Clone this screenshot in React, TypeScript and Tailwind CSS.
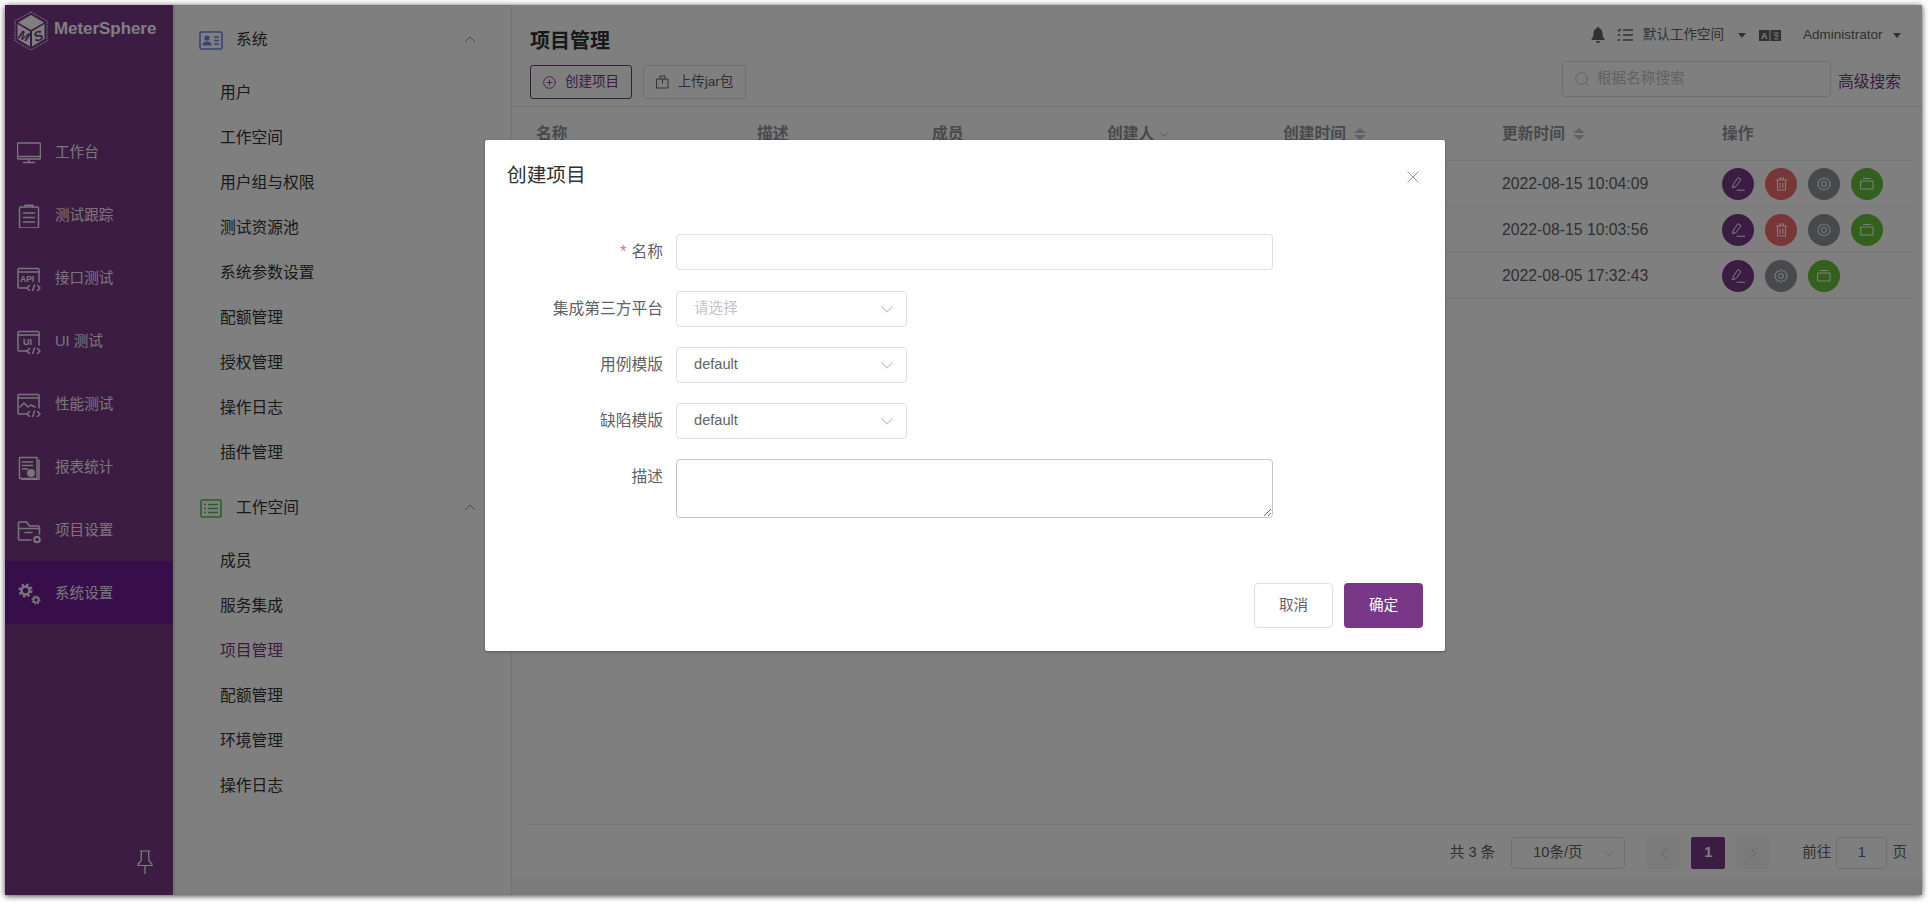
import React from "react";

const S = ({ children, w = 24, h = 24, vb = "0 0 24 24", sw = 1.5, cls = "" }: { children: React.ReactNode; w?: number; h?: number; vb?: string; sw?: number; cls?: string }) => (
  <svg width={w} height={h} viewBox={vb} fill="none" stroke="currentColor" strokeWidth={sw} strokeLinecap="round" strokeLinejoin="round" className={`shrink-0 ${cls}`}>
    {children}
  </svg>
);

const Code = ({ x = 12, y = 21 }: { x?: number; y?: number }) => (
  <path d={`M${x - 1.5} ${y - 2.5}l-2.5 2.5 2.5 2.5M${x + 6.5} ${y - 2.5}l2.5 2.5-2.5 2.5M${x + 3.5} ${y - 3}l-2 6`} />
);

const NavIcons: Record<string, React.ReactNode> = {
  monitor: (
    <S>
      <rect x="0.5" y="2" width="23" height="16" rx="1" />
      <path d="M0.5 15.5h23M12 18v3M6.5 21.5h11" />
    </S>
  ),
  clip: (
    <S>
      <rect x="2.5" y="3" width="19" height="21" rx="1.5" />
      <path d="M8 3V1.2h8V3M6.5 9h11M6.5 13.5h11M6.5 18h11" />
    </S>
  ),
  api: (
    <S>
      <path d="M22 15V2.5a1 1 0 0 0-1-1H2a1 1 0 0 0-1 1V20a1 1 0 0 0 1 1h8" />
      <path d="M1 5h21" />
      <text x="3" y="15" fontSize="8.5" stroke="none" fill="currentColor" fontFamily="Liberation Sans" fontWeight="700">API</text>
      <Code x={14} y={21} />
    </S>
  ),
  ui: (
    <S>
      <path d="M22 15V2.5a1 1 0 0 0-1-1H2a1 1 0 0 0-1 1V20a1 1 0 0 0 1 1h8" />
      <path d="M1 5h21" />
      <text x="6" y="15" fontSize="9" stroke="none" fill="currentColor" fontFamily="Liberation Sans" fontWeight="700">UI</text>
      <Code x={14} y={21} />
    </S>
  ),
  perf: (
    <S>
      <path d="M22 15V2.5a1 1 0 0 0-1-1H2a1 1 0 0 0-1 1V20a1 1 0 0 0 1 1h8" />
      <path d="M1 5h21M3 14l4-4 4 4 3-2 4 2" />
      <Code x={14} y={21} />
    </S>
  ),
  report: (
    <S>
      <path d="M20 1.5H2.5v21H20zM22 4v20H5" />
      <path d="M5.500 6h10M5.500 9.500h10M5.500 13h5" />
      <circle cx="14" cy="17" r="3.200" fill="currentColor" />
    </S>
  ),
  folder: (
    <S>
      <path d="M14 21H2.500a1 1 0 0 1-1-1V4a1 1 0 0 1 1-1h7l3 4h9a1 1 0 0 1 1 1v7" />
      <path d="M1.500 9.500h21M8 13.500h7" />
      <circle cx="20" cy="20.500" r="2.800" strokeWidth="2" />
    </S>
  ),
  gears: (
    <S>
      <circle cx="8.500" cy="8.500" r="6" strokeWidth="2.200" strokeDasharray="2.400 2.300" strokeLinecap="butt" />
      <circle cx="8.500" cy="8.500" r="4" strokeWidth="2.400" />
      <circle cx="19" cy="18" r="3.700" strokeWidth="1.600" strokeDasharray="1.600 1.300" strokeLinecap="butt" />
      <circle cx="19" cy="18" r="2.500" strokeWidth="1.600" />
    </S>
  ),
};

const nav: [string, string][] = [
  ["monitor", "工作台"],
  ["clip", "测试跟踪"],
  ["api", "接口测试"],
  ["ui", "UI 测试"],
  ["perf", "性能测试"],
  ["report", "报表统计"],
  ["folder", "项目设置"],
  ["gears", "系统设置"],
];

const Logo = () => (
  <svg width="36" height="40" viewBox="0 0 36 40" className="shrink-0">
    <path d="M18 1L34 10V30L18 39L2 30V10Z" fill="none" stroke="#ffffff" strokeWidth="1" strokeDasharray="1.500 1" />
    <path d="M18 4L31 11.500L18 19L5 11.500Z" fill="#ffffff" />
    <path d="M4.500 13L17 20.500V35.500L4.500 28Z" fill="#ffffff" />
    <path d="M31.500 13L19 20.500V35.500L31.500 28Z" fill="#ffffff" />
    <text x="5" y="29" fontSize="13" fontWeight="700" fontStyle="italic" fill="#783887" fontFamily="Liberation Sans" transform="rotate(22 10 26)">M</text>
    <text x="21" y="30" fontSize="14" fontWeight="700" fontStyle="italic" fill="#783887" fontFamily="Liberation Sans" transform="rotate(-22 25 26)">S</text>
  </svg>
);

const Sidebar = () => (
  <aside className="flex w-[168px] shrink-0 flex-col bg-[#783887] text-white">
    <div className="flex h-[115px] items-start gap-[5px] pl-[8px] pt-[6px]">
      <Logo />
      <span className="mt-[8px] text-[16.9px] font-bold leading-[20px]">MeterSphere</span>
    </div>
    {nav.map(([icon, label], i) => (
      <div key={label} className={`flex h-[63px] items-center gap-[14px] pl-[12px] pt-[2px] text-[14.6px] text-[#f2ecf5] ${i === 7 ? "bg-[#711c94]" : ""}`}>
        {NavIcons[icon]}
        <span>{label}</span>
      </div>
    ))}
    <div className="mt-auto flex justify-end pb-[21px] pr-[20px]">
      <S w={16} h={24} vb="0 0 16 24" sw={1.2}>
        <path d="M3 1h10M4.500 1l-.5 10-3 3v1.500h14V14l-3-3-.5-10M8 15.500V24" />
      </S>
    </div>
  </aside>
);

const Chevron = ({ up, cls = "", w = 12, h = 7 }: { up?: boolean; cls?: string; w?: number; h?: number }) => (
  <svg width={w} height={h} viewBox="0 0 12 7" fill="none" stroke="currentColor" strokeWidth="1" className={`shrink-0 ${cls}`}>
    <path d={up ? "M1 6l5-5 5 5" : "M1 1l5 5 5-5"} />
  </svg>
);

const MenuHeader = ({ label, icon, cls }: { label: string; icon: React.ReactNode; cls: string }) => (
  <div className={`flex items-start pl-[26px] pr-[35px] ${cls}`}>
    <span className="flex h-[24px] w-[37px] items-center">{icon}</span>
    <span className="flex-1 text-[15.75px] leading-[24px] text-[#333333]">{label}</span>
    <Chevron up cls="mt-[8px] text-[#909399]" />
  </div>
);

const MenuItem = ({ label, active }: { label: string; active?: boolean }) => (
  <div className={`flex h-[45px] items-center pl-[47px] text-[15.75px] ${active ? "text-[#783887]" : "text-[#333333]"}`}>{label}</div>
);

const SubMenu = () => (
  <nav className="w-[339px] shrink-0 border-r border-[#e6e6e6] bg-white shadow-[inset_2px_0_2px_rgba(0,0,0,0.12)]">
    <MenuHeader
      label="系统"
      cls="h-[65px] pt-[23px]"
      icon={
        <svg width="24" height="19" viewBox="0 0 24 19" className="text-[#6f87ea]">
          <rect x="1" y="1" width="22" height="17" rx="1.500" fill="none" stroke="currentColor" strokeWidth="1.600" />
          <circle cx="8" cy="7" r="2.600" fill="currentColor" />
          <path d="M3.500 14.500c0-3 2-4 4.500-4s4.500 1 4.500 4z" fill="currentColor" />
          <path d="M15 6h5M15 9.500h5M15 13h5" stroke="currentColor" strokeWidth="1.400" />
        </svg>
      }
    />
    {["用户", "工作空间", "用户组与权限", "测试资源池", "系统参数设置", "配额管理", "授权管理", "操作日志", "插件管理"].map((t) => (
      <MenuItem key={t} label={t} />
    ))}
    <MenuHeader
      label="工作空间"
      cls="h-[63px] pt-[21px]"
      icon={
        <svg width="22" height="19" viewBox="0 0 22 19" className="ml-[1px] text-[#4fbf56]">
          <rect x="1" y="1" width="20" height="17" rx="1.500" fill="none" stroke="currentColor" strokeWidth="1.600" />
          <path d="M4 5.500h2M8 5.500h10M4 9.500h2M8 9.500h10M4 13.500h2M8 13.500h10" stroke="currentColor" strokeWidth="1.600" />
        </svg>
      }
    />
    {["成员", "服务集成", "项目管理", "配额管理", "环境管理", "操作日志"].map((t) => (
      <MenuItem key={t + "2"} label={t} active={t === "项目管理"} />
    ))}
  </nav>
);

const Caret = () => <span className="h-0 w-0 border-x-[4px] border-t-[5px] border-x-transparent border-t-[#606266]" />;

const TopBar = () => (
  <header className="flex h-[102px] shrink-0 justify-between border-b border-[#e6e6e6] pl-[18px] pr-[21px]">
    <div>
      <h1 className="pt-[22px] text-[20px] font-bold leading-[28px] text-[#303133]">项目管理</h1>
      <div className="mt-[10px] flex gap-[11px]">
        <button className="flex h-[34px] w-[102px] items-center justify-center gap-[9px] rounded-[3px] border border-[#783887] text-[13.5px] text-[#783887]">
          <S w={13} h={13} vb="0 0 13 13" sw={0.9}>
            <circle cx="6.500" cy="6.500" r="5.800" />
            <path d="M6.500 4v5M4 6.500h5" />
          </S>
          创建项目
        </button>
        <button className="flex h-[34px] w-[103px] items-center justify-center gap-[9px] rounded-[3px] border border-[#dcdfe6] text-[13.5px] text-[#606266]">
          <S w={13} h={14} vb="0 0 13 14" sw={1}>
            <path d="M1 4h11v9H1zM4 4V1h5v3M6.500 4v4" />
          </S>
          上传jar包
        </button>
      </div>
    </div>
    <div className="flex flex-col items-end">
      <div className="mt-[20px] flex h-[20px] items-center text-[13.5px] text-[#606266]">
        <svg width="14" height="16" viewBox="0 0 14 16" fill="#606266" className="shrink-0">
          <path d="M7 0a1.200 1.200 0 0 1 1.200 1.300C10.600 1.900 11.500 4 11.500 6.500c0 3 .8 4.300 2 5.500v1H.5v-1c1.200-1.200 2-2.500 2-5.500C2.500 4 3.400 1.900 5.800 1.300A1.200 1.200 0 0 1 7 0zM5 14h4a2 2 0 0 1-4 0z" />
        </svg>
        <svg width="16" height="14" viewBox="0 0 16 14" fill="none" stroke="#606266" strokeWidth="1.500" className="ml-[12px] shrink-0">
          <path d="M6 2h10M6 7h10M6 12h10M.8 2l1 1 2-2M.8 7h2.400M.8 12h2.400" />
        </svg>
        <span className="ml-[9.5px]">默认工作空间</span>
        <span className="ml-[14.5px] flex"><Caret /></span>
        <svg width="22" height="11" viewBox="0 0 22 11" className="ml-[12.5px] shrink-0">
          <rect width="10.500" height="11" fill="#606266" />
          <rect x="11.500" width="10.500" height="11" fill="#606266" />
          <text x="5.250" y="9" fontSize="9" fontWeight="700" textAnchor="middle" fill="#ffffff" fontFamily="Liberation Sans">A</text>
          <path d="M14 3h6M17 3v1.500M15 5.500h4.500L15.500 9h4" stroke="#ffffff" strokeWidth="0.900" fill="none" />
        </svg>
        <span className="ml-[22px]">Administrator</span>
        <span className="ml-[10.5px] flex"><Caret /></span>
      </div>
      <div className="mt-[16px] flex items-start gap-[7px]">
        <div className="flex h-[36px] w-[269px] items-center gap-[8px] rounded-[4px] border border-[#dcdfe6] pl-[12px] text-[14.6px] text-[#c0c4cc]">
          <S w={14} h={14} vb="0 0 14 14" sw={1}>
            <circle cx="6.500" cy="6.500" r="5.800" />
            <path d="M11 11l2.500 2.500" />
          </S>
          根据名称搜索
        </div>
        <span className="mt-[10px] text-[15.75px] leading-[22px] text-[#783887]">高级搜索</span>
      </div>
    </div>
  </header>
);

const SortCaret = () => (
  <span className="ml-[8px] inline-flex flex-col gap-[2px]">
    <span className="h-0 w-0 border-x-[6px] border-b-[5px] border-x-transparent border-b-[#c0c4cc]" />
    <span className="h-0 w-0 border-x-[6px] border-t-[5px] border-x-transparent border-t-[#c0c4cc]" />
  </span>
);

const cols = "grid grid-cols-[221px_175px_175px_176px_220px_219px_203px]";

const Round = ({ color, children }: { color: string; children: React.ReactNode }) => (
  <span className={`flex h-[32px] w-[32px] items-center justify-center rounded-full text-white ${color}`}>{children}</span>
);
const Edit = () => (
  <Round color="bg-[#783887]">
    <S w={14} h={15} vb="0 0 14 15" sw={1}>
      <path d="M1.500 11.500l1-3.500L7 1.500l3 2-4.500 6.500zM6 14.200h7.500" />
    </S>
  </Round>
);
const Del = () => (
  <Round color="bg-[#f56c6c]">
    <S w={13} h={14} vb="0 0 13 14" sw={1.1}>
      <path d="M1 3h11M2.500 3v10h8V3M4.500 3V1h4v2M5 6v4.500M8 6v4.500" />
    </S>
  </Round>
);
const Gear = () => (
  <Round color="bg-[#909399]">
    <S w={14} h={14} vb="0 0 14 14" sw={1}>
      <path d="M7 .8l1.600 1.400 2.100-.3.700 2 1.800 1.100L12.500 7l.7 2-1.800 1.100-.7 2-2.100-.3L7 13.200l-1.600-1.400-2.100.3-.7-2L.8 9l.7-2-.7-2 1.800-1.100.7-2 2.100.3z" />
      <circle cx="7" cy="7" r="2.500" />
    </S>
  </Round>
);
const Box = () => (
  <Round color="bg-[#67c23a]">
    <S w={14} h={13} vb="0 0 14 13" sw={1}>
      <path d="M1 4h12v8H1zM3.500 1.500h7" />
    </S>
  </Round>
);

const rows = [
  { date: "2022-08-15 10:04:09", del: true },
  { date: "2022-08-15 10:03:56", del: true },
  { date: "2022-08-05 17:32:43", del: false },
];

const Table = () => (
  <div className="flex-1 text-[15.75px]">
    <div className={`${cols} h-[54px] items-center border-b border-[#ebeef5] pt-[1px] font-bold text-[#909399]`}>
      <span className="pl-[13px]">名称</span>
      <span className="pl-[13px]">描述</span>
      <span className="pl-[13px]">成员</span>
      <span className="flex items-center pl-[13px]">创建人<Chevron cls="ml-[4px] scale-75" /></span>
      <span className="flex items-center pl-[13px]">创建时间<SortCaret /></span>
      <span className="flex items-center pl-[12px]">更新时间<SortCaret /></span>
      <span className="pl-[13px]">操作</span>
    </div>
    {rows.map((r) => (
      <div key={r.date} className={`${cols} h-[46px] items-center border-b border-[#ebeef5] text-[#606266]`}>
        <span className="col-start-6 pl-[12px]">{r.date}</span>
        <span className="flex gap-[11px] pl-[13px]">
          <Edit />
          {r.del && <Del />}
          <Gear />
          <Box />
        </span>
      </div>
    ))}
  </div>
);

const Pagination = () => (
  <div className="flex h-[55px] items-center justify-end border-t border-[#ebeef5] pr-[4px] pt-[2px] text-[14.6px] text-[#606266]">
    <span>共 3 条</span>
    <span className="ml-[16px] flex h-[32px] w-[114px] items-center justify-between rounded-[4px] border border-[#dcdfe6] pl-[21px] pr-[9px]">
      10条/页
      <Chevron cls="text-[#c0c4cc] scale-90" />
    </span>
    <span className="ml-[22px] flex h-[32px] w-[33px] items-center justify-center rounded-[2px] bg-[#f4f4f5] text-[#c0c4cc]">
      <Chevron cls="rotate-90" />
    </span>
    <span className="ml-[11px] flex h-[32px] w-[34px] items-center justify-center rounded-[2px] bg-[#783887] font-bold text-white">1</span>
    <span className="ml-[11px] flex h-[32px] w-[33px] items-center justify-center rounded-[2px] bg-[#f4f4f5] text-[#c0c4cc]">
      <Chevron cls="-rotate-90" />
    </span>
    <span className="ml-[33px]">前往</span>
    <span className="ml-[5px] flex h-[32px] w-[51px] items-center justify-center rounded-[4px] border border-[#dcdfe6]">1</span>
    <span className="ml-[5px]">页</span>
  </div>
);

const Field = ({ label, required, children, cls = "" }: { label: string; required?: boolean; children: React.ReactNode; cls?: string }) => (
  <div className={`flex ${cls}`}>
    <label className="flex h-[36px] w-[172px] shrink-0 items-center justify-end pr-[13px] text-[15.75px] text-[#606266]">
      {required && <span className="mr-[5px] text-[#f56c6c]">*</span>}
      {label}
    </label>
    {children}
  </div>
);

const Sel = ({ value, placeholder }: { value?: string; placeholder?: string }) => (
  <div className={`flex h-[36px] w-[231px] items-center justify-between rounded-[4px] border border-[#dcdfe6] pl-[17px] pr-[12px] text-[14.625px] ${value ? "text-[#606266]" : "text-[#c0c4cc]"}`}>
    {value ?? placeholder}
    <Chevron w={14} h={8} cls="text-[#c0c4cc]" />
  </div>
);

const Dialog = () => (
  <div role="dialog" className="flex h-[511px] w-[960px] flex-col rounded-[2px] bg-white shadow-[0_1px_3px_rgba(0,0,0,0.3)]">
    <div className="flex h-[94px] shrink-0 items-start justify-between pl-[22px] pr-[26px] pt-[21px]">
      <span className="text-[19.7px] leading-[28px] text-[#303133]">创建项目</span>
      <svg width="12" height="12" viewBox="0 0 12 12" fill="none" stroke="#909399" strokeWidth="1" className="mt-[10px]">
        <path d="M.5.5l11 11M11.500.5l-11 11" />
      </svg>
    </div>
    <div className="flex flex-col gap-[20px] pl-[19px]">
      <Field label="名称" required>
        <input className="h-[36px] w-[597px] rounded-[4px] border border-[#dcdfe6] outline-none" />
      </Field>
      <Field label="集成第三方平台" cls="mt-[1px]"><Sel placeholder="请选择" /></Field>
      <Field label="用例模版"><Sel value="default" /></Field>
      <Field label="缺陷模版"><Sel value="default" /></Field>
      <Field label="描述">
        <textarea className="h-[59px] w-[597px] rounded-[4px] border border-[#c0c4cc] outline-none" />
      </Field>
    </div>
    <div className="mt-auto flex justify-end gap-[11px] pb-[23px] pr-[22px]">
      <button className="h-[45px] w-[79px] rounded-[4px] border border-[#dcdfe6] bg-white text-[14.6px] text-[#606266]">取消</button>
      <button className="h-[45px] w-[79px] rounded-[4px] bg-[#783887] text-[14.6px] text-white">确定</button>
    </div>
  </div>
);

export default function App() {
  return (
    <div className="h-[904px] w-[1930px] overflow-hidden bg-white pl-[5px] pt-[5px] font-['Liberation_Sans','Noto_Sans_CJK_SC',sans-serif]">
      <div className="relative flex h-[890px] w-[1917px] bg-white shadow-[0_1px_6px_rgba(0,0,0,0.75)]">
        <Sidebar />
        <SubMenu />
        <main className="flex min-w-0 flex-1 flex-col">
          <TopBar />
          <div className="flex flex-1 flex-col px-[11px]">
            <Table />
            <Pagination />
          </div>
          <div className="h-[16px] shrink-0 bg-[#f6f6f6]" />
        </main>
        <div className="absolute inset-0 bg-black/50 pl-[480px] pt-[135px]">
          <Dialog />
        </div>
      </div>
    </div>
  );
}
